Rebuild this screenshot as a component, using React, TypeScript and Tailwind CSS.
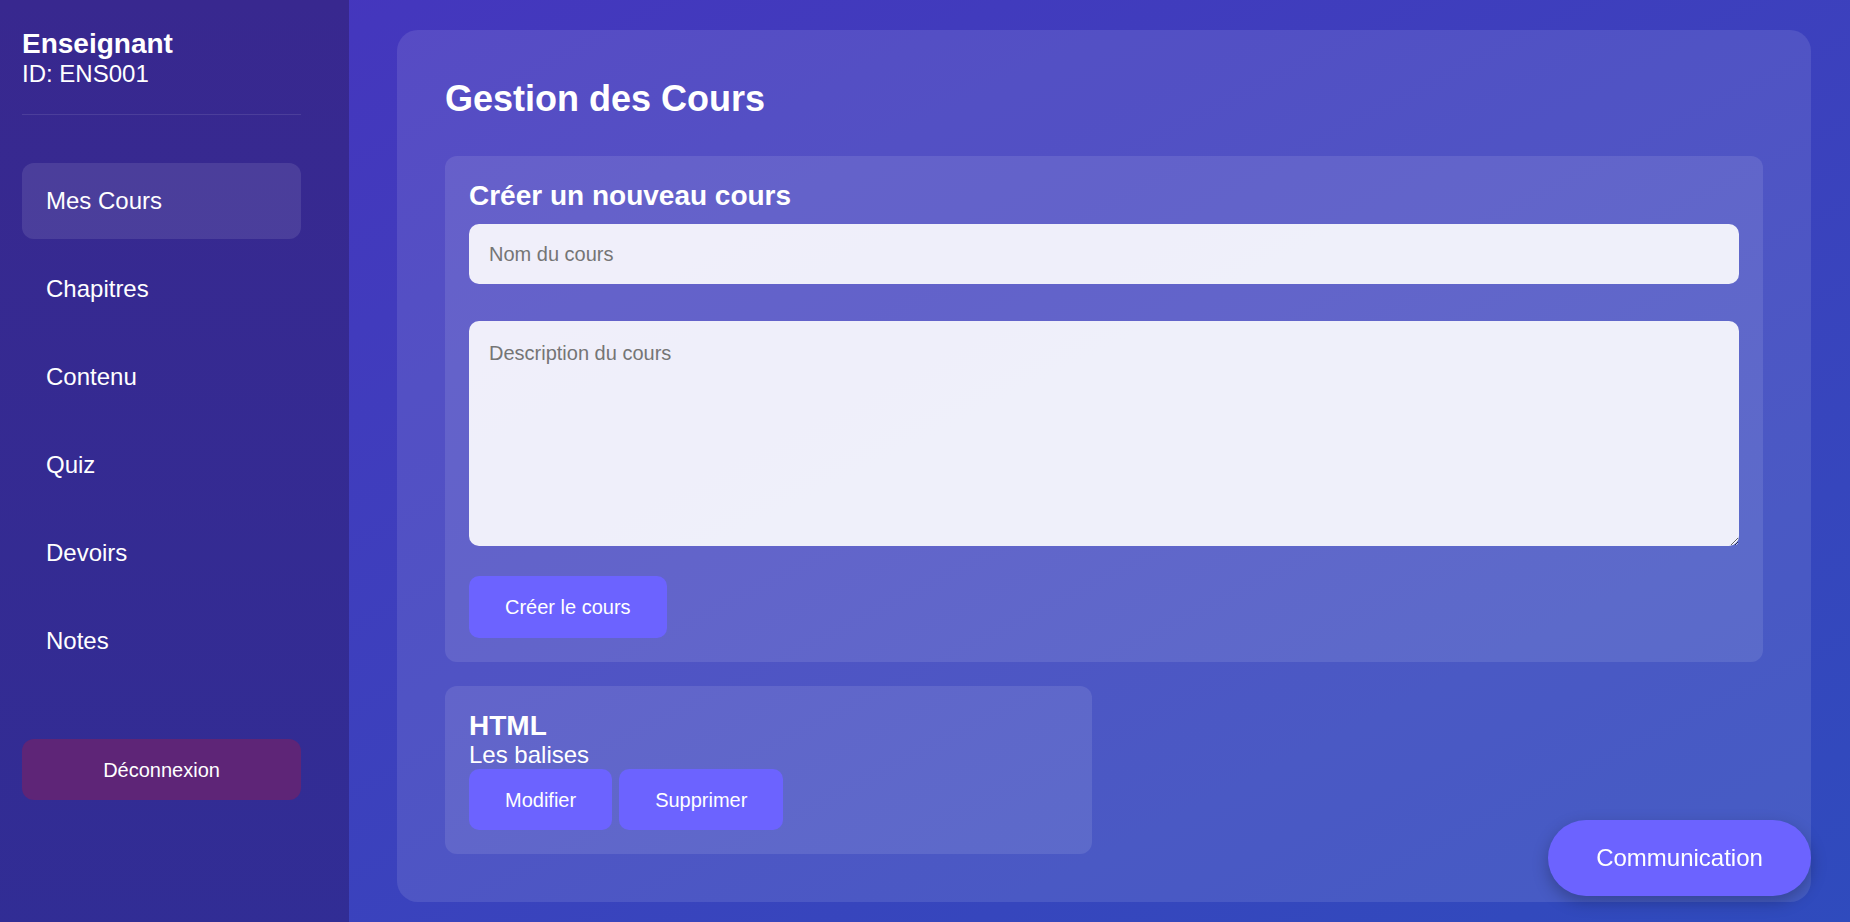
import { useState } from 'react';

const navItems = ['Mes Cours', 'Chapitres', 'Contenu', 'Quiz', 'Devoirs', 'Notes'];

interface Course {
  id: number;
  title: string;
  description: string;
}

export default function App() {
  const [active, setActive] = useState('Mes Cours');
  const [name, setName] = useState('');
  const [description, setDescription] = useState('');
  const [courses] = useState<Course[]>([{ id: 1, title: 'HTML', description: 'Les balises' }]);

  return (
    <div className="min-h-screen flex font-['Liberation_Sans',Arial,sans-serif] text-white bg-gradient-to-br from-[#4634bd] to-[#2f4bbd]">
      {/* Sidebar */}
      <aside className="w-[349px] shrink-0 bg-gradient-to-b from-[#38288f] to-[#312d95] px-[22px] pt-[28px]">
        <div className="w-[279px]">
          <div className="pb-[27px] border-b border-white/10">
            <h3 className="text-[28px] leading-[32px] font-bold">Enseignant</h3>
            <p className="text-[24px] leading-[27px]">ID: ENS001</p>
          </div>

          <nav className="mt-[48px] flex flex-col gap-[12px]">
            {navItems.map((item) => (
              <button
                key={item}
                onClick={() => setActive(item)}
                className={`h-[76px] w-full text-left pl-[24px] text-[24px] rounded-[12px] ${
                  active === item ? 'bg-white/10' : 'hover:bg-white/5'
                }`}
              >
                {item}
              </button>
            ))}
          </nav>

          <button className="mt-[60px] h-[61px] w-full rounded-[12px] bg-[#5e2577] text-[20px]">
            Déconnexion
          </button>
        </div>
      </aside>

      {/* Main */}
      <main className="flex-1 pl-[48px] pr-[39px] pt-[30px] pb-[30px]">
        <div className="bg-white/10 rounded-[21px] px-[48px] pt-[48px] pb-[48px]">
          <h1 className="text-[36px] leading-[41px] font-bold mb-[37px]">Gestion des Cours</h1>

          <div className="bg-white/10 rounded-[12px] p-[24px]">
            <h3 className="text-[28px] leading-[32px] font-bold mb-[12px]">Créer un nouveau cours</h3>
            <input
              type="text"
              value={name}
              onChange={(e) => setName(e.target.value)}
              placeholder="Nom du cours"
              className="block w-full h-[60px] px-[20px] rounded-[10px] bg-white/90 text-[20px] text-gray-900 placeholder:text-[#757575] outline-none"
            />
            <textarea
              value={description}
              onChange={(e) => setDescription(e.target.value)}
              placeholder="Description du cours"
              className="block w-full h-[225px] mt-[37px] px-[20px] pt-[17px] rounded-[10px] bg-white/90 text-[20px] text-gray-900 placeholder:text-[#757575] outline-none"
            />
            <button className="mt-[30px] h-[62px] px-[36px] rounded-[10px] bg-[#6c63ff] text-[20px]">
              Créer le cours
            </button>
          </div>

          <div className="grid grid-cols-2 gap-[24px] mt-[24px]">
            {courses.map((course) => (
              <div key={course.id} className="bg-white/10 rounded-[12px] p-[24px]">
                <h3 className="text-[28px] leading-[31px] font-bold">{course.title}</h3>
                <p className="text-[24px] leading-[28px]">{course.description}</p>
                <div className="flex gap-[7px]">
                  <button className="h-[61px] px-[36px] rounded-[10px] bg-[#6c63ff] text-[20px]">Modifier</button>
                  <button className="h-[61px] px-[36px] rounded-[10px] bg-[#6c63ff] text-[20px]">Supprimer</button>
                </div>
              </div>
            ))}
          </div>
        </div>
      </main>

      <button className="fixed right-[39px] bottom-[26px] w-[263px] h-[76px] rounded-full bg-[#6c63ff] text-[24px] shadow-[0_6px_16px_rgba(0,0,0,0.25)]">
        Communication
      </button>
    </div>
  );
}
